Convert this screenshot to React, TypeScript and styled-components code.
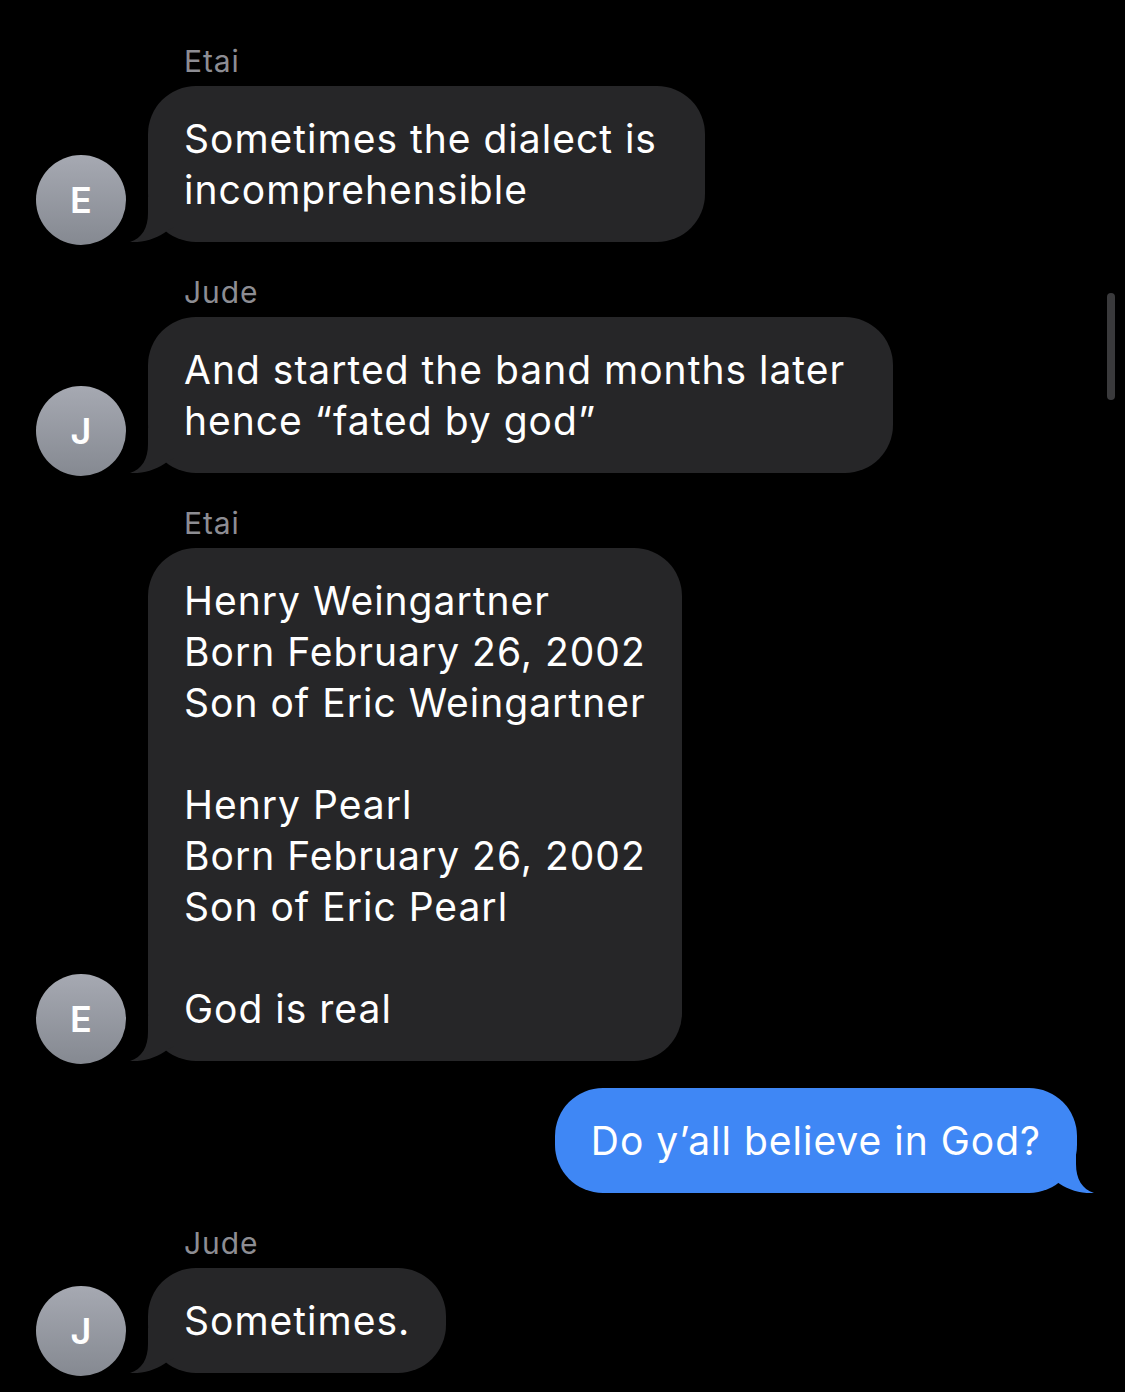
import React from "react";
import styled, { createGlobalStyle } from "styled-components";

const GlobalStyle = createGlobalStyle`
  html, body {
    margin: 0;
    padding: 0;
    background: #000;
  }
  body {
    font-family: Inter, "Noto Sans", "Liberation Sans", sans-serif;
    -webkit-font-smoothing: antialiased;
  }
`;

const Screen = styled.div`
  position: relative;
  width: 1125px;
  height: 1392px;
  overflow: hidden;
  background: #000;
`;

const Thread = styled.div`
  display: flex;
  flex-direction: column;
  padding-top: 44px;
`;

const Group = styled.div`
  display: flex;
  flex-direction: column;
  & + & {
    margin-top: 33px;
  }
`;

const OutgoingGroup = styled.div`
  display: flex;
  justify-content: flex-end;
  padding-right: 48px;
  margin-top: 27px;
  & + ${Group} {
    margin-top: 33px;
  }
`;

const SenderName = styled.div`
  margin-left: 184px;
  margin-bottom: 8px;
  font-size: 30px;
  line-height: 34px;
  color: #8d8d93;
  letter-spacing: 0.9px;
`;

const Row = styled.div`
  display: flex;
  align-items: flex-end;
  gap: 22px;
  padding-left: 36px;
`;

const Avatar = styled.div`
  flex: none;
  width: 90px;
  height: 90px;
  margin-bottom: -3px;
  border-radius: 50%;
  background: linear-gradient(180deg, #a6a9b2 0%, #858991 100%);
  display: flex;
  align-items: center;
  justify-content: center;
  color: #fff;
  font-size: 36px;
  font-weight: 600;
  line-height: 1;
`;

const Bubble = styled.div<{ $outgoing?: boolean }>`
  position: relative;
  padding: 27px 36px 27px 36px;
  border-radius: 48px;
  background: ${(p) => (p.$outgoing ? "#3f87f5" : "#262628")};
  color: #fff;
  font-size: 39px;
  line-height: 51px;
  letter-spacing: 1px;
  white-space: pre;
`;

const TailSvg = styled.svg<{ $outgoing?: boolean }>`
  position: absolute;
  bottom: 0;
  width: 44px;
  height: 45px;
  ${(p) =>
    p.$outgoing
      ? "right: -17px; transform: scaleX(-1);"
      : "left: -18px;"}
`;

const ScrollIndicator = styled.div`
  position: absolute;
  top: 293px;
  right: 10px;
  width: 8px;
  height: 107px;
  border-radius: 4px;
  background: #3a3a3c;
`;

function Tail({ outgoing, color }: { outgoing?: boolean; color: string }) {
  return (
    <TailSvg $outgoing={outgoing} viewBox="0 0 44 45" aria-hidden>
      <path
        d="M18 0 L18 16 C18 31 12 41 0 45 C14 46 28 41 37 34 L44 30 L44 0 Z"
        fill={color}
      />
    </TailSvg>
  );
}

type Incoming = { name: string; initial: string; text: string };

function IncomingMessage({ name, initial, text }: Incoming) {
  return (
    <Group>
      <SenderName>{name}</SenderName>
      <Row>
        <Avatar>{initial}</Avatar>
        <Bubble>
          <Tail color="#262628" />
          {text}
        </Bubble>
      </Row>
    </Group>
  );
}

export default function App() {
  return (
    <>
      <GlobalStyle />
      <Screen>
        <Thread>
          <IncomingMessage
            name="Etai"
            initial="E"
            text={"Sometimes the dialect is \nincomprehensible"}
          />
          <IncomingMessage
            name="Jude"
            initial="J"
            text={"And started the band months later \nhence \u201cfated by god\u201d"}
          />
          <IncomingMessage
            name="Etai"
            initial="E"
            text={
              "Henry Weingartner\nBorn February 26, 2002\nSon of Eric Weingartner\n\nHenry Pearl\nBorn February 26, 2002\nSon of Eric Pearl\n\nGod is real"
            }
          />
          <OutgoingGroup>
            <Bubble $outgoing>
              <Tail outgoing color="#3f87f5" />
              {"Do y\u2019all believe in God?"}
            </Bubble>
          </OutgoingGroup>
          <IncomingMessage name="Jude" initial="J" text={"Sometimes."} />
        </Thread>
        <ScrollIndicator />
      </Screen>
    </>
  );
}
